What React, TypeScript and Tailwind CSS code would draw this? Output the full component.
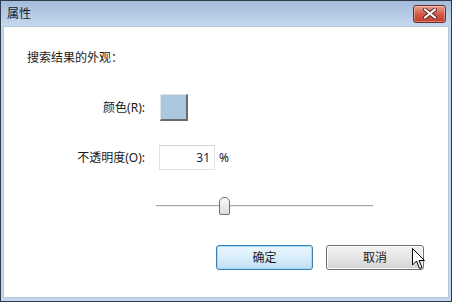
import React from "react";

const FONT = "font-['Noto_Sans','Noto_Sans_CJK_SC',sans-serif]";

function CloseButton() {
  return (
    <div className="w-[33px] h-[18px] rounded-[3px] border border-[#6d2b24] bg-gradient-to-b from-[#e9a093] via-[#d25a46] to-[#c33e2a] grid place-items-center shadow-[inset_0_0_0_1px_rgba(255,255,255,0.35)]">
      <svg width="14" height="11" viewBox="0 0 14 11">
        <path d="M2 1.5 L12 9.5 M12 1.5 L2 9.5" stroke="#5b2a22" strokeWidth="4" strokeLinecap="round" />
        <path d="M2 1.5 L12 9.5 M12 1.5 L2 9.5" stroke="#ffffff" strokeWidth="2.2" strokeLinecap="round" />
      </svg>
    </div>
  );
}

function Cursor() {
  return (
    <svg className="absolute left-[412px] top-[248px]" width="14" height="23" viewBox="0 0 14 23">
      <path
        d="M0.5 0.5 L0.5 17 L4.5 13 L7.5 20.5 L10 19.5 L7 12.5 L12.5 12.5 Z"
        fill="#ffffff"
        stroke="#000000"
        strokeWidth="1"
        strokeLinejoin="round"
      />
    </svg>
  );
}

function Slider() {
  return (
    <div className="relative ml-[152px] w-[217px] h-[18px] flex items-center">
      <div className="w-full h-[2px] border-t border-[#a8a8a8] border-b border-b-[#ececec]" />
      <div className="absolute left-[63px] top-0 w-[11px] h-[18px] rounded-t-[5px] rounded-b-[2px] border border-[#6f6f6f] bg-gradient-to-b from-[#fbfbfb] to-[#dcdcdc]" />
    </div>
  );
}

export default function App() {
  return (
    <div className={`relative w-[452px] h-[302px] flex flex-col bg-[#2f3b4a] p-[1px] ${FONT}`}>
      <div className="flex-1 flex flex-col bg-[#c3d6ec]">
        <div className="h-[25px] flex items-center justify-between pl-[6px] pr-[5px] bg-gradient-to-b from-[#a3bcdb] to-[#c6d8ee]">
          <span className="text-[12px] text-[#101c2c] leading-none">属性</span>
          <CloseButton />
        </div>
        <div className="flex-1 mx-[2px] mb-[3px] bg-white border border-[#b6c8dc] flex flex-col text-[12px] text-[#1a1a1a]">
          <div className="mt-[23px] pl-[23px] leading-[16px]">搜索结果的外观：</div>

          <div className="mt-[28px] flex items-center">
            <span className="w-[141px] text-right">颜色(R):</span>
            <div className="ml-[15px] w-[28px] h-[27px] bg-[#a9c8dd] border-t border-l border-[#e4e4e4] border-r-2 border-b-2 border-r-[#6a6a6a] border-b-[#6a6a6a]" />
          </div>

          <div className="mt-[24px] flex items-center">
            <span className="w-[141px] text-right">不透明度(O):</span>
            <div className="ml-[14px] w-[56px] h-[25px] border border-[#dfe1e4] border-t-[#cfd2d6] flex items-center justify-end pr-[4px] text-[#1a1f4a]">
              31
            </div>
            <span className="ml-[4px]">%</span>
          </div>

          <div className="mt-[27px]">
            <Slider />
          </div>

          <div className="mt-[30px] flex justify-end gap-[13px] pr-[24px]">
            <button className="w-[97px] h-[25px] rounded-[3px] border border-[#3c7fb1] bg-gradient-to-b from-[#eaf6fd] via-[#d9eefb] to-[#bfdff3] shadow-[inset_0_0_0_1px_#9fdcf6] text-[12px] text-[#1a1a1a]">
              确定
            </button>
            <button className="w-[98px] h-[25px] rounded-[3px] border border-[#707070] bg-gradient-to-b from-[#f2f2f2] via-[#e6e6e6] to-[#d3d3d3] shadow-[inset_0_0_0_1px_#fcfcfc] text-[12px] text-[#1a1a1a]">
              取消
            </button>
          </div>
        </div>
      </div>
      <Cursor />
    </div>
  );
}
